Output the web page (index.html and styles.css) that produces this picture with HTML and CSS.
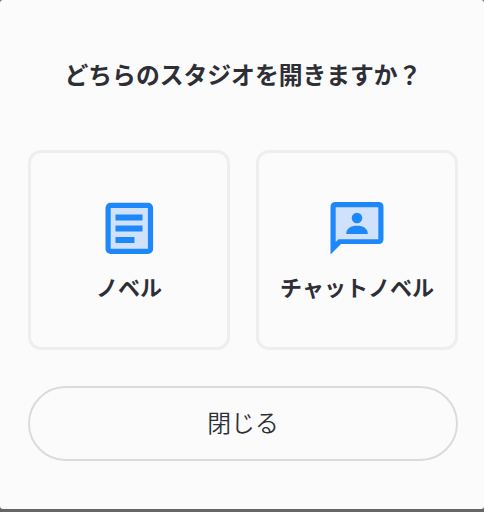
FILE: index.html
```html
<!DOCTYPE html>
<html lang="ja">
<head>
<meta charset="utf-8">
<title>スタジオ選択</title>
<link rel="stylesheet" href="styles.css">
</head>
<body>
<main class="dialog">
  <h1 class="title">どちらのスタジオを開きますか？</h1>
  <div class="choices">
    <button class="choice">
      <svg class="icon" viewBox="0 0 60 60">
        <rect x="9.1" y="7.4" width="42.4" height="46" rx="2.5" fill="#d0e2fb" stroke="#1e88fb" stroke-width="5.2"/>
        <path d="M16.500 16.500h27v6h-27zM16.500 27.500h27v6h-27zM16.500 39h19v6h-19z" fill="#1e88fb"/>
      </svg>
      <span class="label">ノベル</span>
    </button>
    <button class="choice">
      <svg class="icon" viewBox="0 0 60 60">
        <path d="M6 6.500H54V43.500H12L6 48z" fill="#d0e2fb"/>
        <path fill-rule="evenodd" d="M8.500 4H51.500Q56.500 4 56.500 9V41Q56.500 46 51.500 46H14L3.500 56.500V9Q3.500 4 8.500 4zM8.700 9.200V44L11.500 41.200H51.300V9.200z" fill="#1e88fb"/>
        <circle cx="30" cy="20" r="5.300" fill="#1e88fb"/>
        <path d="M19.200 36C19.200 30.300 24 27.700 30 27.700S40.800 30.300 40.800 36z" fill="#1e88fb"/>
      </svg>
      <span class="label">チャットノベル</span>
    </button>
  </div>
  <button class="close">閉じる</button>
</main>
</body>
</html>
```
FILE: styles.css
```css
* {
  box-sizing: border-box;
}

body {
  margin: 0;
  height: 512px;
  overflow: hidden;
  background: #666;
  color: #2e2f36;
  font-family: "Noto Sans CJK JP", sans-serif;
}

.dialog {
  display: flex;
  flex-direction: column;
  height: 509px;
  padding: 56px 26px 48px 28px;
  border-radius: 3px;
  background: #fbfbfb;
}

.title {
  margin: 0 0 58px;
  font-size: 23.8px;
  font-weight: 700;
  line-height: 36px;
  text-align: center;
  white-space: nowrap;
}

.choices {
  display: grid;
  grid-template-columns: 1fr 1fr;
  gap: 26px;
  margin-bottom: 36px;
}

button {
  padding: 0;
  background: transparent;
  color: inherit;
  font-family: inherit;
}

.choice {
  display: flex;
  flex-direction: column;
  align-items: center;
  height: 200px;
  padding-top: 45px;
  border: 3px solid #eee;
  border-radius: 13px;
}

.icon {
  width: 60px;
  height: 60px;
}

.label {
  margin-top: 12px;
  font-size: 22px;
  font-weight: 700;
  line-height: 32px;
  white-space: nowrap;
}

.close {
  height: 75px;
  padding-bottom: 5px;
  border: 2px solid #dbdbdb;
  border-radius: 38px;
  font-size: 23.8px;
  font-weight: 350;
}
```
